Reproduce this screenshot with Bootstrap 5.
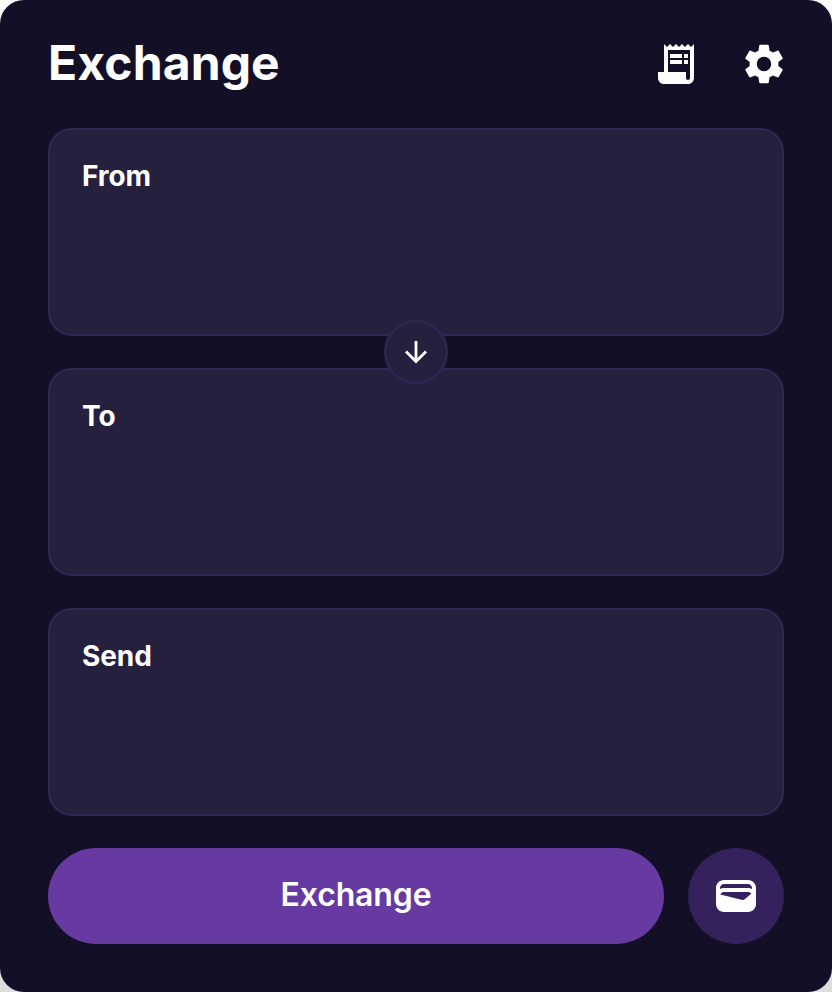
<!DOCTYPE html>
<html lang="en">
<head>
<meta charset="utf-8">
<meta name="viewport" content="width=device-width, initial-scale=1">
<title>Exchange</title>
<link href="https://cdn.jsdelivr.net/npm/bootstrap@5.3.0/dist/css/bootstrap.min.css" rel="stylesheet">
<style>
  body { background: linear-gradient(#fafafa, #dedede); font-family: Inter, "Liberation Sans", sans-serif; color: #fff; }
  .popup { height: 992px; padding: 0 48px 48px; background: #120f27; border-radius: 24px; }
  .popup-head { height: 128px; margin-right: -4px; }
  .popup-title { font-size: 48px; line-height: 58px; font-weight: 700; letter-spacing: .12px; padding-bottom: 2px; }
  .icon-row { gap: 40px; }
  .icon-btn { width: 48px; height: 48px; }
  .panels { gap: 32px; }
  .panel { height: 208px; padding: 29px 32px; background: #25203e; border: 2px solid #2e2852; border-radius: 24px; }
  .panel-title { font-size: 28px; line-height: 34px; font-weight: 700; letter-spacing: -.1px; }
  .swap { width: 64px; height: 64px; z-index: 1; top: 224px; background: #25203e; border: 2px solid #2e2852; }
  .actions { gap: 24px; margin-top: 32px; }
  .btn-exchange { height: 96px; padding: 0 0 2px; background: #673aa1; color: #fff; font-size: 32px; font-weight: 600; letter-spacing: -.15px; }
  .btn-wallet { width: 96px; height: 96px; background: #35215c; }
  .btn-exchange:hover { background: #7343b0; color: #fff; }
</style>
</head>
<body>
<main class="popup d-flex flex-column">
  <header class="popup-head d-flex align-items-center justify-content-between">
    <h1 class="popup-title m-0">Exchange</h1>
    <div class="icon-row d-flex">
      <button class="icon-btn btn p-0 border-0 d-flex" aria-label="History">
        <svg width="48" height="48" viewBox="0 0 24 24" fill="#fff"><path d="M19.5 3.5L18 2l-1.5 1.5L15 2l-1.5 1.5L12 2l-1.5 1.5L9 2 7.5 3.5 6 2v14H3v3c0 1.66 1.34 3 3 3h12c1.66 0 3-1.34 3-3V2l-1.5 1.5zM19 19c0 .55-.45 1-1 1s-1-.45-1-1v-3H8V5h11v14z"/><path d="M9 7h6v2H9zM16 7h2v2h-2zM9 10h6v2H9zM16 10h2v2h-2z"/></svg>
      </button>
      <button class="icon-btn btn p-0 border-0 d-flex" aria-label="Settings">
        <svg width="48" height="48" viewBox="0 0 24 24" fill="#fff"><path d="M19.14 12.94c.04-.3.06-.61.06-.94 0-.32-.02-.64-.07-.94l2.03-1.58c.18-.14.23-.41.12-.61l-1.92-3.32c-.12-.22-.37-.29-.59-.22l-2.39.96c-.5-.38-1.03-.7-1.62-.94l-.36-2.54c-.04-.24-.24-.41-.48-.41h-3.84c-.24 0-.43.17-.47.41l-.36 2.54c-.59.24-1.13.57-1.62.94l-2.39-.96c-.22-.08-.47 0-.59.22L2.74 8.87c-.12.21-.08.47.12.61l2.03 1.58c-.05.3-.09.63-.09.94s.02.64.07.94l-2.03 1.58c-.18.14-.23.41-.12.61l1.92 3.32c.12.22.37.29.59.22l2.39-.96c.5.38 1.03.7 1.62.94l.36 2.54c.05.24.24.41.48.41h3.84c.24 0 .44-.17.47-.41l.36-2.54c.59-.24 1.13-.56 1.62-.94l2.39.96c.22.08.47 0 .59-.22l1.92-3.32c.12-.22.07-.47-.12-.61l-2.01-1.58zM12 15.6c-1.98 0-3.6-1.62-3.6-3.6s1.62-3.6 3.6-3.6 3.6 1.62 3.6 3.6-1.62 3.6-3.6 3.6z"/></svg>
      </button>
    </div>
  </header>
  <div class="panels d-flex flex-column position-relative">
    <section class="panel"><h2 class="panel-title m-0">From</h2></section>
    <section class="panel"><h2 class="panel-title m-0">To</h2></section>
    <section class="panel"><h2 class="panel-title m-0">Send</h2></section>
    <button class="swap btn p-0 rounded-circle position-absolute start-50 translate-middle d-flex align-items-center justify-content-center" aria-label="Swap direction">
      <svg width="32" height="32" viewBox="0 0 32 32" fill="none" stroke="#fff" stroke-width="2.8"><path d="M16 5v20.5M6 15.5l10 10 10-10"/></svg>
    </button>
  </div>
  <div class="actions d-flex">
    <button class="btn-exchange btn rounded-pill border-0 flex-grow-1">Exchange</button>
    <button class="btn-wallet btn rounded-circle border-0 p-0 d-flex align-items-center justify-content-center" aria-label="Wallet">
      <svg width="48" height="48" viewBox="0 0 24 24" fill="#fff"><path d="M18 4H6C3.79 4 2 5.79 2 8v8c0 2.21 1.79 4 4 4h12c2.21 0 4-1.79 4-4V8c0-2.21-1.79-4-4-4zm-1.86 9.77c-.24.2-.57.28-.88.2L4.15 11.25C4.45 10.52 5.16 10 6 10h12c.67 0 1.26.34 1.63.84l-3.49 2.93zM18 6c1.1 0 2 .9 2 2v.55c-.59-.34-1.27-.55-2-.55H6c-.73 0-1.41.21-2 .55V8c0-1.1.9-2 2-2h12z"/></svg>
    </button>
  </div>
</main>
<script src="https://cdn.jsdelivr.net/npm/bootstrap@5.3.0/dist/js/bootstrap.bundle.min.js"></script>
</body>
</html>
